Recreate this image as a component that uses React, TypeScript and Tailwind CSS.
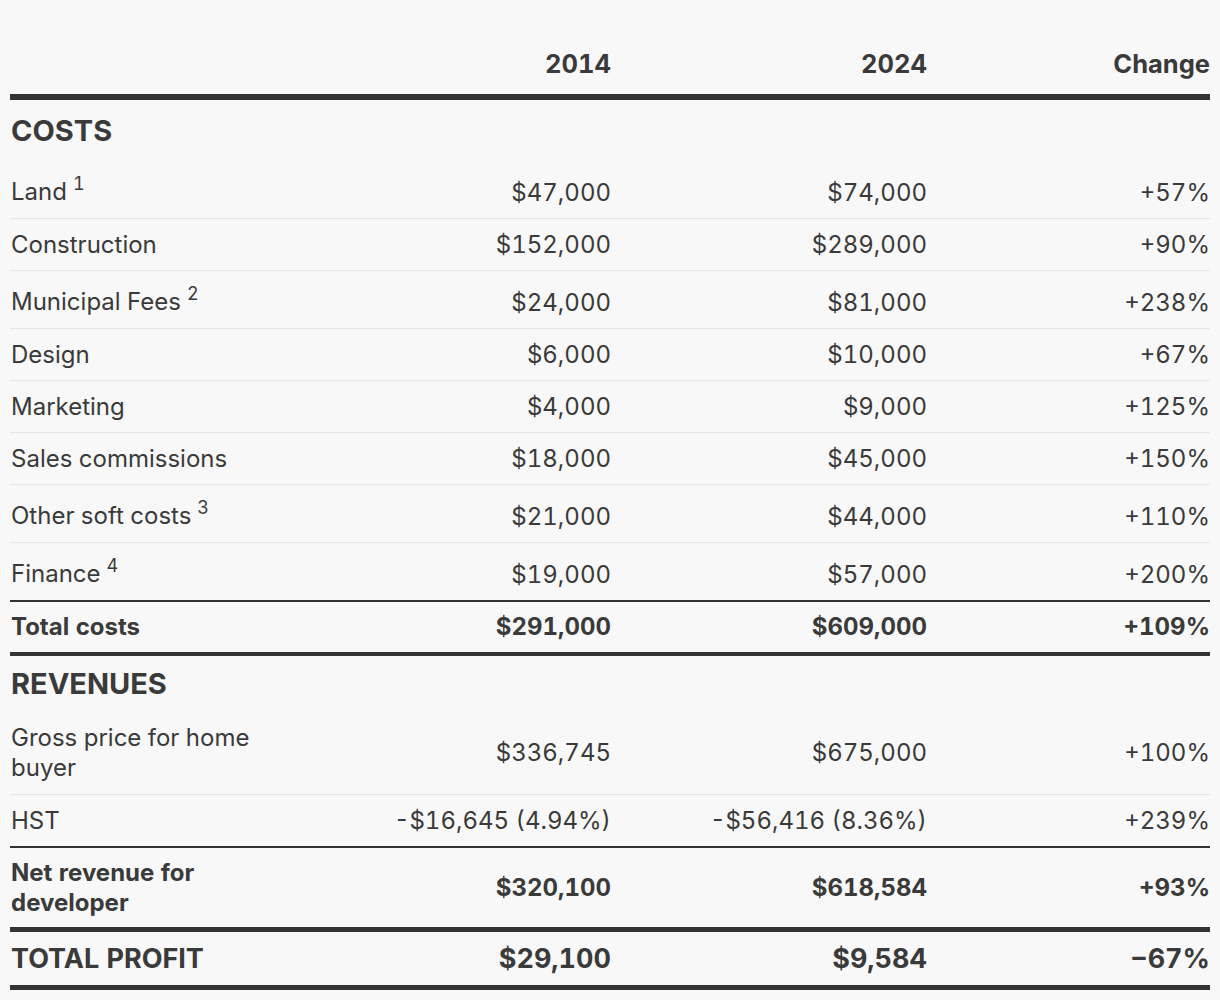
import React from "react";

type Row = {
    label: string;
    note?: string;
    a: string;
    b: string;
    c: string;
};

const costs: Row[] = [
    { label: "Land", note: "1", a: "$47,000", b: "$74,000", c: "+57%" },
    { label: "Construction", a: "$152,000", b: "$289,000", c: "+90%" },
    { label: "Municipal Fees", note: "2", a: "$24,000", b: "$81,000", c: "+238%" },
    { label: "Design", a: "$6,000", b: "$10,000", c: "+67%" },
    { label: "Marketing", a: "$4,000", b: "$9,000", c: "+125%" },
    { label: "Sales commissions", a: "$18,000", b: "$45,000", c: "+150%" },
    { label: "Other soft costs", note: "3", a: "$21,000", b: "$44,000", c: "+110%" },
    { label: "Finance", note: "4", a: "$19,000", b: "$57,000", c: "+200%" },
];

const grid = "grid grid-cols-[285px_316px_316px_283px] items-center";

function CostRow({ row, last }: { row: Row; last: boolean }) {
    // rows with a footnote are a bit taller, the text sits lower
    let size = row.note ? "h-[58px] pt-[6px]" : "h-[52px]";
    if (last) size = "h-[57px] pt-[6px]";

    return (
        <div className={`${grid} ${size} ${last ? "" : "border-b border-[#e6e6e6]"}`}>
            <div className="pl-[1px]">
                {row.label}
                {row.note && (
                    <span className="relative -top-[10px] ml-[6px] text-[18px]">{row.note}</span>
                )}
            </div>
            <div className="text-right">{row.a}</div>
            <div className="text-right">{row.b}</div>
            <div className="text-right">{row.c}</div>
        </div>
    );
}

export default function App() {
    return (
        <div
            className="min-h-screen bg-[#f8f8f8] px-[10px] text-[24px] leading-[30px] text-[#3a3a3a] tabular-nums"
            style={{ fontFamily: "Inter, 'Noto Sans', sans-serif" }}
        >
            <div className="w-[1200px]">
                <div className={`${grid} h-[94px] items-end pb-[15px] text-[25.5px] font-bold`}>
                    <div />
                    <div className="text-right">2014</div>
                    <div className="text-right">2024</div>
                    <div className="text-right">Change</div>
                </div>
                <div className="h-[6px] bg-[#333]" />

                <div className="flex h-[61px] items-center pl-[1px] text-[29px] font-bold">COSTS</div>

                {costs.map((row, i) => (
                    <CostRow key={row.label} row={row} last={i === costs.length - 1} />
                ))}

                <div className={`${grid} h-[52px] border-t-2 border-[#333] font-bold`}>
                    <div className="pl-[1px]">Total costs</div>
                    <div className="text-right">$291,000</div>
                    <div className="text-right">$609,000</div>
                    <div className="text-right">+109%</div>
                </div>
                <div className="h-[4px] bg-[#333]" />

                <div className="flex h-[55px] items-center pl-[1px] text-[29px] font-bold">REVENUES</div>

                <div className={`${grid} h-[84px] border-b border-[#e6e6e6]`}>
                    <div className="pl-[1px] pr-[30px]">Gross price for home buyer</div>
                    <div className="text-right">$336,745</div>
                    <div className="text-right">$675,000</div>
                    <div className="text-right">+100%</div>
                </div>
                <div className={`${grid} h-[51px]`}>
                    <div className="pl-[1px]">HST</div>
                    <div className="text-right">-$16,645 (4.94%)</div>
                    <div className="text-right">-$56,416 (8.36%)</div>
                    <div className="text-right">+239%</div>
                </div>
                <div className={`${grid} h-[81px] border-t-2 border-[#333] font-bold`}>
                    <div className="pl-[1px] pr-[30px]">Net revenue for developer</div>
                    <div className="text-right">$320,100</div>
                    <div className="text-right">$618,584</div>
                    <div className="text-right">+93%</div>
                </div>
                <div className="h-[5px] bg-[#333]" />

                <div className={`${grid} h-[53px] text-[27px] font-bold`}>
                    <div className="pl-[1px]">TOTAL PROFIT</div>
                    <div className="text-right">$29,100</div>
                    <div className="text-right">$9,584</div>
                    <div className="text-right">−67%</div>
                </div>
                <div className="h-[5px] bg-[#333]" />
            </div>
        </div>
    );
}
